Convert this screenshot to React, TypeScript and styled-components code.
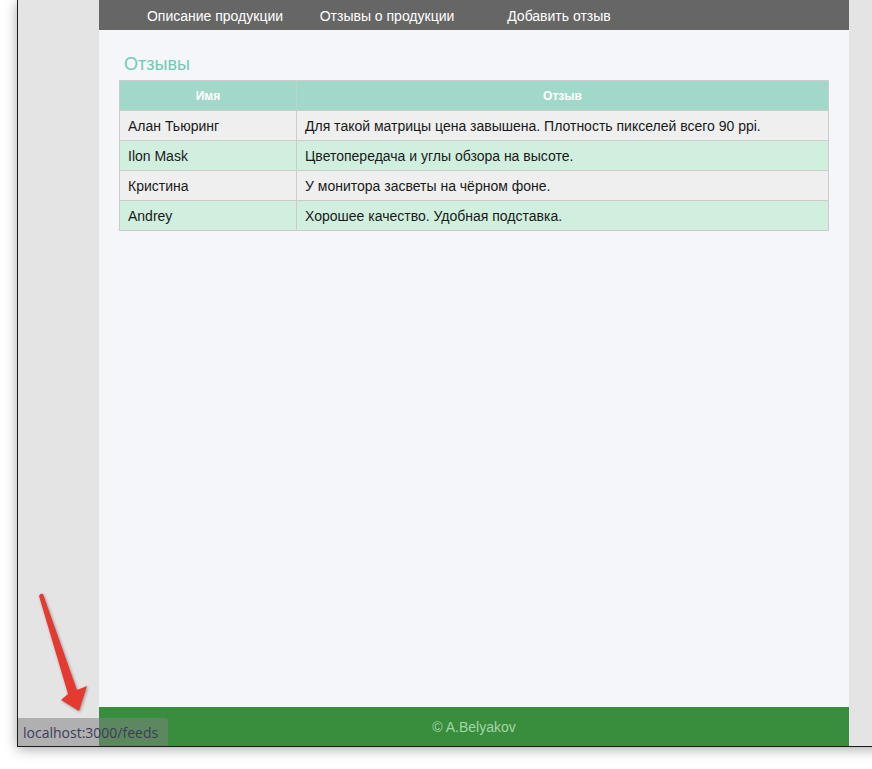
import React from "react";
import styled, { createGlobalStyle } from "styled-components";

const Global = createGlobalStyle`
  html, body { margin: 0; padding: 0; background: #ffffff; }
  body { font-family: "Liberation Sans", Arial, sans-serif; }
`;

const Screen = styled.div`
  position: relative;
  width: 872px;
  height: 769px;
  overflow: hidden;
  background: #ffffff;
`;

const Window = styled.div`
  position: relative;
  margin-left: 17px;
  width: 870px;
  height: 746px;
  background: #e4e4e4;
  border-left: 1px solid #1c1c1c;
  border-bottom: 1px solid #1c1c1c;
  box-shadow: 0 2px 12px rgba(0, 0, 0, 0.35);
  display: flex;
`;

const Page = styled.div`
  margin-left: 81px;
  width: 750px;
  height: 100%;
  display: flex;
  flex-direction: column;
`;

const Nav = styled.nav`
  height: 30px;
  background: #666666;
  display: flex;
  padding-left: 30px;
`;

const NavLink = styled.a`
  width: 172px;
  text-align: center;
  color: #ffffff;
  font-size: 14px;
  line-height: 32px;
  text-decoration: none;
  white-space: nowrap;
`;

const Main = styled.main`
  flex: 1;
  background: #f5f6fa;
  padding: 0 20px;
`;

const Heading = styled.h2`
  margin: 21px 0 0 5px;
  height: 29px;
  font-size: 18px;
  font-weight: normal;
  color: #72c9b6;
  line-height: 27px;
`;

const Table = styled.table`
  width: 100%;
  border-collapse: collapse;
  border: 1px solid #cccccc;
  font-size: 14px;
`;

const HeadCell = styled.th<{ $w?: number }>`
  ${(p) => (p.$w ? `width: ${p.$w}px;` : "")}
  height: 29px;
  padding: 0;
  background: #a1d8c9;
  color: #ffffff;
  font-size: 12px;
  font-weight: bold;
  text-align: center;
  border: 1px solid #cccccc;
`;

const Row = styled.tr<{ $alt: boolean }>`
  background: ${(p) => (p.$alt ? "#d0efde" : "#eeefee")};
`;

const Cell = styled.td`
  height: 29px;
  padding: 0 0 0 8px;
  color: #1a1a1a;
  border: 1px solid #cccccc;
`;

const Footer = styled.footer`
  height: 39px;
  background: #388e3c;
  color: #a5d6a7;
  font-size: 14px;
  line-height: 40px;
  text-align: center;
`;

const StatusBar = styled.div`
  position: absolute;
  left: 0;
  bottom: 0;
  height: 28px;
  padding: 0 10px 0 5px;
  background: rgba(128, 128, 128, 0.52);
  border-top-right-radius: 3px;
  color: #3c3c5a;
  font-family: "Open Sans", "Noto Sans", sans-serif;
  font-size: 14px;
  line-height: 29px;
`;

const Arrow = styled.svg`
  position: absolute;
  left: 30px;
  top: 590px;
  filter: drop-shadow(1px 1px 1.5px rgba(0, 0, 0, 0.35));
`;

const reviews = [
  { name: "Алан Тьюринг", text: "Для такой матрицы цена завышена. Плотность пикселей всего 90 ppi." },
  { name: "Ilon Mask", text: "Цветопередача и углы обзора на высоте." },
  { name: "Кристина", text: "У монитора засветы на чёрном фоне." },
  { name: "Andrey", text: "Хорошее качество. Удобная подставка." },
];

export default function App() {
  return (
    <>
      <Global />
      <Screen>
        <Window>
          <Page>
            <Nav>
              <NavLink href="#">Описание продукции</NavLink>
              <NavLink href="#">Отзывы о продукции</NavLink>
              <NavLink href="#">Добавить отзыв</NavLink>
            </Nav>
            <Main>
              <Heading>Отзывы</Heading>
              <Table>
                <thead>
                  <tr>
                    <HeadCell $w={176}>Имя</HeadCell>
                    <HeadCell>Отзыв</HeadCell>
                  </tr>
                </thead>
                <tbody>
                  {reviews.map((r, i) => (
                    <Row key={r.name} $alt={i % 2 === 1}>
                      <Cell>{r.name}</Cell>
                      <Cell>{r.text}</Cell>
                    </Row>
                  ))}
                </tbody>
              </Table>
            </Main>
            <Footer>© A.Belyakov</Footer>
          </Page>
          <StatusBar>localhost:3000/feeds</StatusBar>
        </Window>
        <Arrow width="62" height="126" viewBox="0 0 62 126">
          <path
            d="M9 6 Q10 3 13 4 L47 100 L57 96 L49 121 L31 110 L38 104 Z"
            fill="#e53a2f"
          />
        </Arrow>
      </Screen>
    </>
  );
}
